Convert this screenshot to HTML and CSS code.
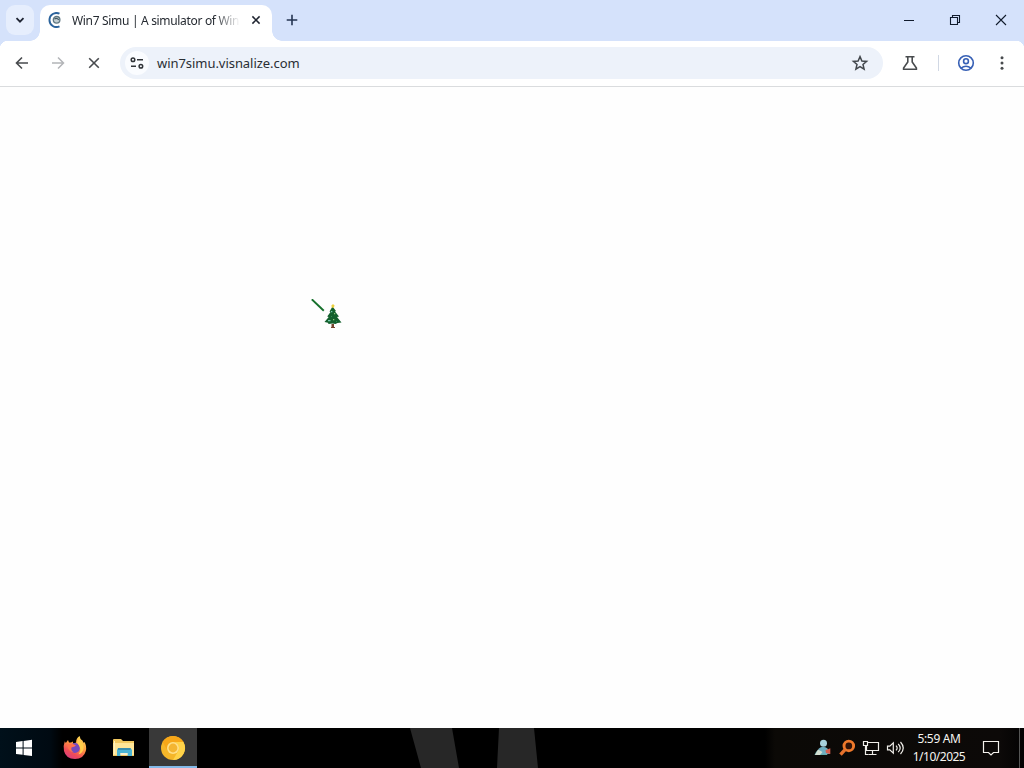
FILE: index.html
```html
<!DOCTYPE html>
<html lang="en">
<head>
<meta charset="utf-8">
<title>Win7 Simu</title>
<link rel="stylesheet" href="styles.css">
</head>
<body>
<div class="desktop">
  <header class="tabstrip">
    <button class="tab-search" aria-label="Search tabs"><svg width="28" height="30" viewBox="0 0 28 30"><path d="M10.5 13.2l3.5 3.5 3.5-3.5" fill="none" stroke="#1f2533" stroke-width="1.8"/></svg></button>
    <div class="tab">
      <svg class="favicon" width="16" height="16" viewBox="0 0 16 16"><path d="M12.5 1.7A7 7 0 1 0 12.5 14.3" fill="none" stroke="#2b639c" stroke-width="1.9"/><circle cx="9.6" cy="7.8" r="3.3" fill="#c3cfd3" stroke="#5f7782" stroke-width="1.3"/><path d="M7.4 7q2.4-1.6 4.4.8" fill="none" stroke="#435964" stroke-width="1.2"/></svg>
      <span class="tab-title">Win7 Simu | A simulator of Win</span>
      <svg class="tab-close" width="16" height="16" viewBox="0 0 16 16"><path d="M4.4 4.4l7.2 7.2M11.6 4.4l-7.2 7.2" stroke="#1f2430" stroke-width="1.5"/></svg>
    </div>
    <svg class="new-tab" width="16" height="16" viewBox="0 0 16 16"><path d="M8 2.7v10.6M2.7 8h10.6" stroke="#253552" stroke-width="1.6"/></svg>
    <div class="window-buttons">
      <svg width="46" height="40" viewBox="0 0 46 40"><path d="M18 20.5h10" stroke="#111b2c"/></svg>
      <svg width="46" height="40" viewBox="0 0 46 40"><path d="M18.5 17.5h7v7h-7zM20.5 17v-1.5h7v7H26" fill="none" stroke="#111b2c" stroke-width="1.1"/></svg>
      <svg width="46" height="40" viewBox="0 0 46 40"><path d="M18 15l10 10M28 15L18 25" stroke="#111b2c" stroke-width="1.1"/></svg>
    </div>
  </header>
  <nav class="toolbar">
    <svg width="20" height="20" viewBox="0 0 20 20"><path d="M16 10H4.8M10 4.5L4.5 10l5.5 5.5" fill="none" stroke="#484b4e" stroke-width="1.6"/></svg>
    <svg width="20" height="20" viewBox="0 0 20 20"><path d="M4 10h11.2M10 4.5l5.5 5.5-5.5 5.5" fill="none" stroke="#b3b5b8" stroke-width="1.5"/></svg>
    <svg width="20" height="20" viewBox="0 0 20 20"><path d="M5.2 5.2l9.6 9.6M14.8 5.2l-9.6 9.6" stroke="#484b4e" stroke-width="1.6"/></svg>
    <div class="omnibox">
      <span class="site-info"><svg width="16" height="16" viewBox="0 0 16 16"><g fill="none" stroke="#303438" stroke-width="1.5"><circle cx="4" cy="4.7" r="1.8"/><path d="M8 4.7h6M2 11.3h5"/><circle cx="11.9" cy="11.3" r="1.8"/></g></svg></span>
      <span class="url">win7simu.visnalize.com</span>
      <svg class="star" width="20" height="20" viewBox="0 0 20 20"><path d="M10 3.6l1.9 4.4 4.7.4-3.6 3.1 1.1 4.7L10 13.7l-4.1 2.5L7 11.5 3.4 8.4 8.1 8z" fill="none" stroke="#42474c" stroke-width="1.5"/></svg>
    </div>
    <div class="actions">
      <svg width="20" height="20" viewBox="0 0 20 20"><path d="M5.5 3.7h9M7.8 4v5L3.6 15v1.3h12.8V15l-4.2-6V4" fill="none" stroke="#484b4e" stroke-width="1.6"/></svg>
      <i class="divider"></i>
      <svg class="profile" width="20" height="20" viewBox="0 0 20 20"><g fill="none" stroke="#3760b5" stroke-width="1.6"><circle cx="10" cy="10" r="7.3"/><circle cx="10" cy="8.2" r="2.4"/><path d="M5 15.2q5-3.9 10 0"/></g></svg>
      <svg class="menu" width="4" height="16" viewBox="0 0 4 16"><g fill="#484b4e"><circle cx="2" cy="2.7" r="1.5"/><circle cx="2" cy="8" r="1.5"/><circle cx="2" cy="13.3" r="1.5"/></g></svg>
    </div>
  </nav>
  <main class="page">
    <svg class="cursor" width="32" height="32" viewBox="0 0 32 32"><path d="M.8 .3l12 11.500" stroke="#16702b" stroke-width="1.9"/><path d="M21.500 7.500l3.500 4.500-1 .5 4 5-2 .5 4.500 5.500-4 .5-2 1-3-.5-4 .5-.5-1.200-3.500-.8 4.200-5-1.500-.5 3.300-4.500-1-.5z" fill="#13602d"/><path d="M20.500 25h2.500v3h1v1h-4v-1h.5z" fill="#75432d"/><path d="M21 5.500h2v1h1L23 7.700V9l-1-.6-1.200.6V7.700l-1-1.200H21z" fill="#ecd03e"/><path d="M20 12h1.300v1.300H20zM17 21h2.500v1.300H17z" fill="#76ccb1"/><path d="M23 14h1.200v1.200H23zM22 20h1.300v1.300H22z" fill="#8fc77a"/><path d="M25 22h1v1h-1zM20 17h1v1h-1z" fill="#308a55"/></svg>
  </main>
  <footer class="taskbar">
    <svg class="wallpaper" width="1024" height="40" viewBox="0 0 1024 40"><path d="M410 0h42l7 40h-38zM499 0h35l4 40h-41z" fill="#272727"/></svg>
    <div class="launchers">
      <div class="launcher"><svg width="18" height="18" viewBox="0 0 18 18"><path d="M1 3l6.6-1v6.4H1zM8.6 1.9L17 .7v7.7H8.6zM1 9.5h6.6v6.3L1 14.900zM8.600 9.500H17V17l-8.400-1.100z" fill="#fff"/></svg></div>
      <div class="launcher"><svg width="26" height="26" viewBox="0 0 26 26">
        <defs><linearGradient id="fox" x1=".8" y1="0" x2=".25" y2="1"><stop stop-color="#ffe45b"/><stop offset=".45" stop-color="#ff9340"/><stop offset=".75" stop-color="#ef4b58"/><stop offset="1" stop-color="#da3c7e"/></linearGradient></defs>
        <path d="M2.8 6.2l1 1.8L6 5.1l1 2.5q2 0 4-1.2-.3 1.8.6 2.4l2.5-1.3Q14 3.4 17.6 1q.2 3 3 4.8l.8 2 1-.9q2.6 4 1.4 9-2 7.8-10.8 8.1Q3.800 23.800 2 16 1 10.500 2.800 6.200z" fill="url(#fox)"/><circle cx="12.9" cy="13" r="5" fill="#7549bd"/><path d="M5 9q4-.6 6 .1l3 1.3q-2 2-4.3 1.8-1.4 3 2 5-5.5 0-6.7-8.2z" fill="#ff704d"/><path d="M17.500 2q.1 4 3.200 6.800 2 4-.4 8-1.200 2-3.700 2.500 3.300-5 .2-9Q13.800 7 17.500 2z" fill="#ffce4b"/></svg></div>
      <div class="launcher"><svg width="24" height="24" viewBox="0 0 24 24"><path d="M1 4q0-1 1-1h7l2 2h11v15H1z" fill="#f2c860"/><path d="M1 7h21v12H1z" fill="#ffe597"/><path d="M6 12h12.500l1.500 2v6h-4.500v-3h-7v3H5v-6z" fill="#4bb4d4"/><path d="M6 12h12.500v2H6z" fill="#398dae"/><path d="M8.500 17h7v2h-7z" fill="#f7efd0"/><path d="M2 5h1v13H2z" fill="#fff2be"/></svg></div>
      <div class="launcher active"><svg width="26" height="26" viewBox="0 0 26 26"><circle cx="13" cy="13" r="12" fill="#f5b629"/><path d="M2.600 7A12 12 0 0 1 23.400 7H13a6 6 0 0 0-5.200 9z" fill="#f7a719"/><path d="M23.400 7A12 12 0 0 1 13 25l5.200-9A6 6 0 0 0 13 7z" fill="#ffd349"/><circle cx="13" cy="13" r="6" fill="#ffe08a"/><circle cx="13" cy="13" r="4.400" fill="#f4b532"/></svg></div>
    </div>
    <div class="tray">
      <svg width="20" height="20" viewBox="0 0 20 20"><path d="M5 12q-2 .8-3.500 5h13l-3-6z" fill="#65acae"/><circle cx="10.500" cy="5.300" r="3.500" fill="#a9d2dd"/><path d="M4.500 16q-.2-6.800 5-7.300 6-.2 7.500 7.300z" fill="#6fadc0"/><path d="M5 11.500l4.500 2.500L7 17H2z" fill="#d4dfd0"/><path d="M12.500 12.300l4.800-2V16l-4.300-1z" fill="#d75d4c"/></svg>
      <svg width="20" height="20" viewBox="0 0 20 20"><circle cx="11.800" cy="7.900" r="4.800" fill="#301308" stroke="#ef792b" stroke-width="2.900"/><path d="M8.300 11.300L3.500 16.600" stroke="#e6722d" stroke-width="3.400"/></svg>
      <svg width="20" height="20" viewBox="0 0 20 20"><g fill="none" stroke="#f0eee9" stroke-width="1.2"><path d="M6.500 4.500h11v8h-12V8M11.500 13v3M7.500 16.500h8"/><path d="M2.500 3.500h4v4h-4zM4.500 8v8.500h3"/></g></svg>
      <svg width="20" height="20" viewBox="0 0 20 20"><path d="M2.500 8.200h2.300l3.500-3.300v10.200l-3.500-3.300H2.500zM11 7.700q2.300 2.300 0 4.600M13.200 5.800q4 4.200 0 8.400M15.500 4q5.500 6 0 12" fill="none" stroke="#f0eee9" stroke-width="1.2"/></svg>
    </div>
    <div class="clock"><span class="time">5:59 AM</span><span class="date">1/10/2025</span></div>
    <svg class="notifications" width="18" height="18" viewBox="0 0 18 18"><path d="M1.500 2.500h15v11h-5L9 16l-2.500-2.500h-5z" fill="none" stroke="#f4f1ed" stroke-width="1.2"/></svg>
    <i class="show-desktop"></i>
  </footer>
</div>
</body>
</html>
```

FILE: styles.css
```css
* { box-sizing: border-box; }
body { margin: 0; overflow: hidden; font-family: "Noto Sans", "Open Sans", sans-serif; }
svg { display: block; flex: none; }
.desktop { width: 1024px; height: 768px; display: flex; flex-direction: column; }
.tabstrip { height: 41px; flex: none; display: flex; background: #d5e2fb; }
.tab-search { width: 28px; height: 30px; margin: 5px 6px 0; padding: 0; border: 0; border-radius: 9px; background: #e6eefd; }
.tab { position: relative; width: 232px; height: 36px; margin-top: 5px; padding: 7px 8px 7px 7px; display: flex; border-radius: 10px 10px 0 0; background: #fff; }
.tab::before, .tab::after { content: ""; position: absolute; bottom: 0; width: 10px; height: 10px; }
.tab::before { left: -10px; background: radial-gradient(circle at 0 0, transparent 9.5px, #fff 10px); }
.tab::after { right: -10px; background: radial-gradient(circle at 100% 0, transparent 9.5px, #fff 10px); }
.favicon { margin-right: 9px; }
.tab-title { width: 168px; height: 18px; white-space: nowrap; font-size: 12px; line-height: 17px; letter-spacing: -0.32px; color: #252a31; -webkit-mask-image: linear-gradient(90deg, #000 142px, transparent 168px); mask-image: linear-gradient(90deg, #000 142px, transparent 168px); }
.tab-close { margin-left: 8px; }
.new-tab { margin: 12px 0 0 12px; }
.window-buttons { display: flex; margin-left: auto; }
.toolbar { height: 46px; flex: none; display: flex; align-items: center; gap: 16px; padding: 0 20px 1px 12px; border-bottom: 1px solid #dadcde; background: radial-gradient(circle at 8px 8px, #fff 8px, #d5e2fb 8.5px) 0 0 / 8px 8px no-repeat, radial-gradient(circle at 0 8px, #fff 8px, #d5e2fb 8.5px) 100% 0 / 8px 8px no-repeat, #fff; }
.toolbar > svg { margin-bottom: 1px; }
.omnibox { width: 763px; height: 32px; margin-bottom: 1px; display: flex; align-items: center; padding: 0 13px 0 5px; border-radius: 16px; background: #edf2fa; }
.site-info { width: 24px; height: 24px; display: grid; place-items: center; border-radius: 12px; background: #fafcff; }
.url { margin-left: 8px; font-size: 13px; line-height: 20px; letter-spacing: -0.05px; color: #292e34; white-space: nowrap; }
.star { margin-left: auto; }
.actions { display: flex; align-items: center; padding: 0 0 1px 1px; }
.divider { width: 1px; height: 16px; margin: 0 17px 0 18px; background: #d1d8e4; }
.menu { margin-left: 24px; }
.page { position: relative; flex: 1; background: #fefefe; }
.cursor { position: absolute; left: 311px; top: 212px; }
.taskbar { position: relative; height: 40px; flex: none; display: flex; background: linear-gradient(90deg, #00101a 0, #000a12 50px, #000 62px, #000 765px, #0b0906 775px, #0c0908 1000px, #030203); color: #f7f5f1; }
.wallpaper { position: absolute; inset: 0; }
.launchers { position: relative; display: flex; gap: 1px; padding-right: 1px; }
.launcher { width: 48px; height: 40px; display: grid; place-items: center; }
.launcher:first-child { margin-right: 2px; }
.launcher.active { background: #393939; border-bottom: 2px solid #83b9e8; padding-top: 2px; }
.tray { position: relative; display: flex; gap: 4px; margin-left: auto; padding: 10px 0; }
.clock { position: relative; width: 68px; display: flex; flex-direction: column; align-items: center; padding-top: 2px; font-size: 12px; line-height: 18px; }
.time { letter-spacing: -0.35px; }
.date { letter-spacing: -0.5px; }
.notifications { position: relative; margin: 11px 19px 0 9px; }
.show-desktop { width: 5px; border-left: 1px solid #555; }
```
